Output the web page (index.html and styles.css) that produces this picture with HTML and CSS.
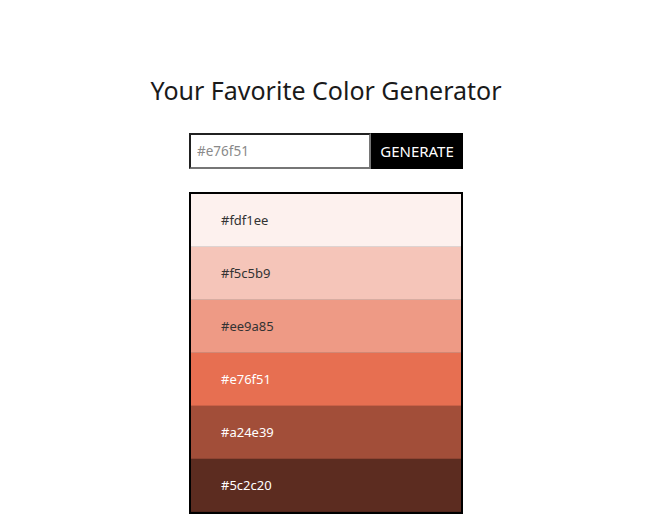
FILE: index.html
```html
<!DOCTYPE html>
<html>
<head>
<meta charset="utf-8">
<link rel="stylesheet" href="styles.css">
</head>
<body>
<main class="app">
  <h1 class="title">Your Favorite Color Generator</h1>
  <form class="form">
    <input class="input" type="text" placeholder="#e76f51">
    <button class="btn" type="button">GENERATE</button>
  </form>
  <ul class="list">
    <li class="swatch light" style="background:#fdf1ee">#fdf1ee</li>
    <li class="swatch light" style="background:#f5c5b9">#f5c5b9</li>
    <li class="swatch light" style="background:#ee9a85">#ee9a85</li>
    <li class="swatch dark" style="background:#e76f51">#e76f51</li>
    <li class="swatch dark" style="background:#a24e39">#a24e39</li>
    <li class="swatch dark" style="background:#5c2c20">#5c2c20</li>
  </ul>
</main>
</body>
</html>
```
FILE: styles.css
```css
html, body {
  margin: 0;
  padding: 0;
  background: #fff;
}
body {
  font-family: "Noto Sans", "Open Sans", sans-serif;
  color: #111;
}
.app {
  display: flex;
  flex-direction: column;
  align-items: center;
  padding-top: 72px;
}
.title {
  margin: 0;
  font-size: 25px;
  font-weight: 400;
  line-height: 36px;
  color: #1a1a1a;
}
.form {
  display: flex;
  margin-top: 25px;
  width: 274px;
  height: 36px;
}
.input {
  box-sizing: border-box;
  width: 182px;
  height: 36px;
  margin: 0;
  border: 2px inset #767676;
  padding: 0 6px;
  font-family: inherit;
  font-size: 13.5px;
}
.input::placeholder {
  color: #8a8a8a;
}
.btn {
  box-sizing: border-box;
  width: 92px;
  height: 36px;
  margin: 0;
  border: none;
  background: #000;
  color: #fff;
  font-family: inherit;
  font-size: 15px;
  padding: 0;
}
.list {
  list-style: none;
  margin: 23px 0 0;
  padding: 0;
  width: 274px;
  box-sizing: border-box;
  border: 2px solid #000;
}
.swatch {
  height: 51px;
  padding-bottom: 1px;
  border-bottom: 1px solid rgba(0,0,0,0.12);
  display: flex;
  align-items: center;
  padding-left: 30px;
  font-size: 13px;
  box-sizing: content-box;
}
.light { color: #333; }
.dark { color: #fff; }
```
